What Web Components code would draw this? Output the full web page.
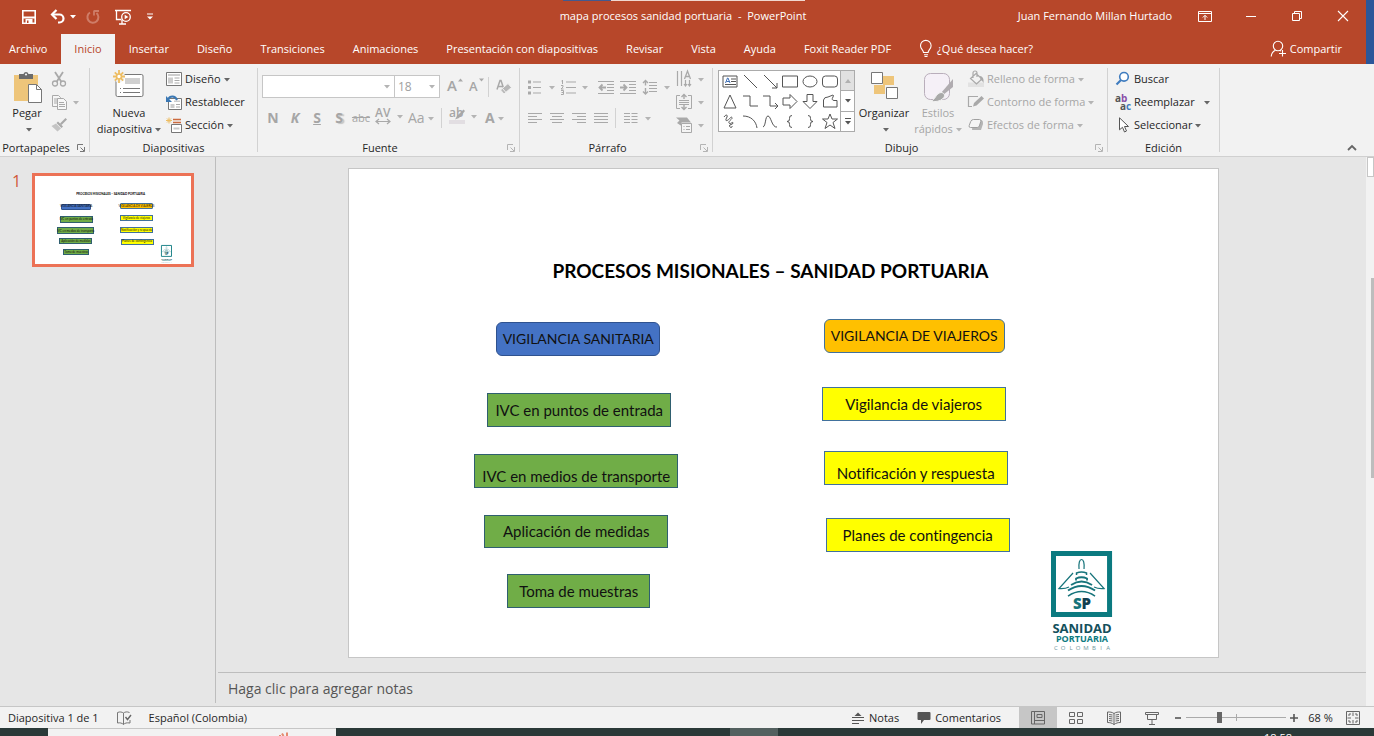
<!DOCTYPE html>
<html lang="es">
<head>
<meta charset="utf-8">
<title>mapa procesos sanidad portuaria - PowerPoint</title>
<style>
  html, body {
    height: 100%;
    margin: 0;
  }
  body {
    font: 11px/16px "Open Sans", "Noto Sans", sans-serif;
    color: #262626;
    overflow: hidden;
  }
</style>
</head>
<body>
<ppt-app></ppt-app>

<script>
// name: [width, height, markup]
const G = '#a9a9a9';
const ICONS = {
  arrow: [6, 4, '<path d="M0 0h6L3 3.5z" fill="currentColor"/>'],
  save: [16, 16, '<path d="M1.8 1.8h12.4v12.4H1.8z" fill="none" stroke="#fff" stroke-width="1.6"/><path d="M2 7.500h12v2H2zM4.500 10h7v5h-7z" fill="#fff"/><path d="M6 11.500h1.500V14H6z" fill="#b7472a"/>'],
  undo: [16, 16, '<path d="M2 5.500h7.500a4 4 0 0 1 0 8H8" fill="none" stroke="#fff" stroke-width="2.200"/><path d="M6.500 1 2 5.500 6.500 10" fill="none" stroke="#fff" stroke-width="2.200"/>'],
  redo: [16, 16, '<path d="M5 3.500A5.500 5.500 0 1 0 11.500 4" fill="none" stroke="#cf7d68" stroke-width="2"/><path d="M9 1.500v5M9 2h5" fill="none" stroke="#cf7d68" stroke-width="1.800"/>'],
  show: [18, 16, '<path d="M1 1.500h16M2.500 2v8.500h5M8 11v4M5 15h7" fill="none" stroke="#fff" stroke-width="1.300"/><circle cx="12" cy="8" r="4.300" fill="#b7472a" stroke="#fff" stroke-width="1.300"/><path d="M10.700 5.700v4.600L14.300 8z" fill="#fff"/>'],
  qat: [8, 8, '<path d="M1 1h6" stroke="#fff"/><path d="M1 3.500h6L4 6.500z" fill="#fff"/>'],
  ribbonopt: [14, 12, '<path d="M.5 1.500h13v10H.5zM.5 3.500h13" fill="none" stroke="#fff"/><path d="M7 10V5.500M4.800 7.500 7 5.300l2.200 2.200" fill="none" stroke="#fff"/>'],
  min: [10, 10, '<path d="M0 5.500h10" stroke="#fff"/>'],
  restore: [12, 12, '<path d="M1.500 3.500h7v7h-7zM3.500 3V1.500h7v7H9" fill="none" stroke="#fff"/>'],
  close: [12, 12, '<path d="M1 1l10 10M11 1 1 11" stroke="#fff" stroke-width="1.100"/>'],
  bulb: [14, 18, '<path d="M4.500 12.500c0-2.500-3-3.500-3-6.800a5.300 5.300 0 0 1 10.600 0c0 3.300-3 4.300-3 6.800zM5 14.700h4M5.500 16.500h3" fill="none" stroke="#fff" stroke-width="1.100"/>'],
  person: [16, 18, '<circle cx="8" cy="6" r="4.700" fill="none" stroke="#fff" stroke-width="1.100"/><path d="M1.200 16.500c.3-3.500 1.800-5.300 4.300-6.300M12.500 10v6.500M9 13.500h7M9.800 10.300l1.200.8" fill="none" stroke="#fff" stroke-width="1.100"/>'],
  paste: [32, 32, '<path d="M3 5h24v26H3z" fill="#eec57a"/><path d="M8 4h4.500a2.600 2.600 0 0 1 5 0H22v5H8z" fill="#6b6b6b"/><circle cx="15" cy="4.500" r="1.100" fill="#f2f2f2"/><path d="M17.500 14.500h8l5 5v13H17.500z" fill="#fff" stroke="#777"/><path d="M25.500 14.500v5h5" fill="none" stroke="#777"/>'],
  cut: [16, 16, `<path d="M4 1l6.500 10M12 1 5.500 11" stroke="${G}" stroke-width="1.800"/><circle cx="4" cy="12.500" r="2.500" fill="none" stroke="${G}" stroke-width="1.300"/><circle cx="12" cy="12.500" r="2.500" fill="none" stroke="${G}" stroke-width="1.300"/>`],
  copy: [16, 16, `<path d="M1.500 1.500h6l2 2v9h-8z" fill="#f5f5f5" stroke="${G}"/><path d="M3 5h4M3 7h3M3 9h3" stroke="${G}"/><path d="M6.500 4.500h6l3 3v8h-9z" fill="#f7f7f7" stroke="${G}"/><path d="M8 8.500h5M8 10.500h6M8 12.500h6" stroke="${G}"/>`],
  brush: [16, 16, `<path d="M14.500 1 16 2.500 10.500 8 9 6.500z" fill="${G}"/><path d="M7 4.500 12 9.500 10.500 11 5.500 6z" fill="${G}"/><path d="M5 6.500 10 11.500 6.500 14.500 .5 9z" fill="#c4c4c4"/>`],
  newslide: [32, 32, '<rect x="3" y="4.500" width="27" height="22" rx="1.500" fill="#fff" stroke="#777"/><path d="M12 8h15v6H12z" fill="#d0d0d0"/><path d="M7 18.500h1M10 18.500h17M7 22.500h1M10 22.500h17" stroke="#777"/><path d="M6 .5v12M0 6.500h12M2 2.500l8 8M10 2.500l-8 8" stroke="#f2f2f2" stroke-width="4"/><path d="M6 0v4M6 9v4M0 6.500h4M8 6.500h4M1.800 2.300l2.500 2.500M7.700 8.200l2.500 2.500M10.200 2.300 7.700 4.800M4.300 8.200l-2.500 2.500" stroke="#edbd62" stroke-width="1.800"/><circle cx="6" cy="6.500" r="2.400" fill="#fff" stroke="#edbd62" stroke-width="1.500"/>'],
  layout: [16, 16, '<path d="M.5 1.500h15v13H.5z" fill="#fff" stroke="#777"/><path d="M2 3h12v2H2zM2 6.500h5v6H2z" fill="#cdcdcd"/><path d="M8.500 7h5M8.500 9.500h5M8.500 12h5" stroke="#aaa"/>'],
  reset: [16, 16, '<path d="M2.500 4.500h13v11h-13z" fill="#fff" stroke="#777"/><path d="M8 6.500h6v1.500H8zM4.500 10h4v4h-4z" fill="#cdcdcd"/><path d="M10 10.500h4M10 13h4" stroke="#aaa"/><path d="M2 5.500c2-4 7-4 9 .5" fill="none" stroke="#3b78b4" stroke-width="2"/><path d="M0 2v6h6z" fill="#3b78b4"/>'],
  section: [16, 16, '<path d="M7 2.500h8M7 5.500h8" stroke="#cb6a3e" stroke-width="1.300"/><path d="M5.500 7.500h10v8h-10z" fill="#fff" stroke="#777"/><path d="M7.500 10.500h6v2h-6z" fill="#c9c9c9"/><path d="M3 .5v6M0 3.500h6M1 1.500l4 4M5 1.500l-4 4" stroke="#edbd62"/>'],
  grow: [16, 16, `<path d="M11 4.500 13.500 1.500 16 4.500z" fill="${G}"/>`],
  shrink: [16, 16, `<path d="M10 1.500h5L12.500 4.500z" fill="${G}"/>`],
  eraser: [16, 16, `<path d="M1 10.500 4 1.500h1L8 10.500M2.500 7.500h5" fill="none" stroke="${G}" stroke-width="1.500"/><path d="M12 4.500 15.500 8.500 8 15 4.500 11z" fill="#b8b8b8" stroke="#f2f2f2"/><path d="M6.500 9.500 10 13.500" stroke="#f2f2f2"/>`],
  bullets: [16, 16, `<path d="M1 1.500h3v3H1zM1 7h3v3H1zM1 12.500h3v3H1z" fill="${G}"/><path d="M6 3h8M6 8.500h8M6 14h8" stroke="${G}"/>`],
  numbers: [16, 16, `<path d="M2.500 1v4M1.500 2h1M1 6.500h2v1.500L1 10h2.500M1 11.500h2.500v4H1M1.500 13.500h2" fill="none" stroke="${G}"/><path d="M6 3h10M6 8.500h10M6 14h10" stroke="${G}"/>`],
  outdent: [16, 16, `<path d="M0 2.500h16M9 5.500h7M9 8.500h7M9 11.500h7M0 14.500h16" stroke="${G}"/><path d="M8 8.500H2M4.500 5.500l-3 3 3 3" fill="none" stroke="${G}" stroke-width="1.800"/>`],
  indent: [16, 16, `<path d="M0 2.500h16M9 5.500h7M9 8.500h7M9 11.500h7M0 14.500h16" stroke="${G}"/><path d="M0 8.500h6M3.500 5.500l3 3-3 3" fill="none" stroke="${G}" stroke-width="1.800"/>`],
  spacing: [16, 16, `<path d="M3.500 1.500v5M1 4l2.500-2.500L6 4M3.500 9v6M1 12.500 3.500 15 6 12.500" fill="none" stroke="${G}" stroke-width="1.400"/><path d="M7 3.500h8M7 6.500h8M7 9.500h8M7 12.500h8" stroke="${G}"/>`],
  left: [16, 16, `<path d="M1 3.500h14M1 6.500h9M1 9.500h14M1 12.500h9" stroke="${G}"/>`],
  center: [16, 16, `<path d="M1 3.500h14M3 6.500h10M1 9.500h14M3 12.500h10" stroke="${G}"/>`],
  right: [16, 16, `<path d="M1 3.500h14M6 6.500h9M1 9.500h14M6 12.500h9" stroke="${G}"/>`],
  justify: [16, 16, `<path d="M1 3.500h14M1 6.500h14M1 9.500h14M1 12.500h14" stroke="${G}"/>`],
  columns: [16, 16, `<path d="M1 3.500h6M1 6.500h6M1 9.500h6M1 12.500h6M8.500 3.500h6M8.500 6.500h6M8.500 9.500h6M8.500 12.500h6" stroke="${G}"/>`],
  direction: [16, 16, `<path d="M1.500 0v15M5.500 0v15M9.500 9v6M13.500 9v6M8 13l1.500 2 1.500-2M12 13l1.500 2 1.500-2" fill="none" stroke="${G}" stroke-width="1.200"/><path d="M8.500 8 11.500 0 14.500 8M9.500 5.500h4" fill="none" stroke="${G}" stroke-width="1.300"/>`],
  valign: [16, 16, `<path d="M4 1.500H.5v13H4M12 1.500h3.500v13H12M3 6.500h10M3 8.500h10M3 10.500h10" fill="none" stroke="${G}"/><path d="M8 0v5M5.500 3 8 .5 10.500 3M8 11v5M5.500 13 8 15.500 10.500 13" fill="none" stroke="${G}" stroke-width="1.400"/>`],
  smart: [16, 16, `<path d="M0 .5h11l4 5H5.500V9L1 6 3.500 3.500z" fill="${G}"/><path d="M5.500 6.500h10v9h-10z" fill="#f5f5f5" stroke="${G}"/><path d="M7.500 9.500h1M10 9.500h4M7.500 12.500h1M10 12.500h4" stroke="${G}"/>`],
  spacingchars: [16, 18, `<path d="M1 14.500h14M4 12l-3 2.500L4 17M12 12l3 2.500L12 17" fill="none" stroke="${G}" stroke-width="1.200"/>`],
  marker: [16, 18, `<path d="M0 13h16v4H0z" fill="#e2dee2"/><path d="M14.500 2.500 16 4 10 11 6 12.500 8 9z" fill="${G}"/>`],
  arrange: [32, 32, '<path d="M15 6h11v9H15zM6 15h11v9H6z" fill="#eec57a"/><path d="M3.500 2.500h11v11h-11zM18.500 17.500h11v11h-11z" fill="#fff" stroke="#777"/>'],
  styles: [32, 32, `<rect x="2.500" y="3.500" width="25" height="26" rx="6" fill="#f5f0f7" stroke="#b9aebb"/><path d="M31 9v8L21 25l-2-2z" fill="#b0acb0"/><path d="M19 22.500c3 0 5 3 2 6-3 3-8 3.500-12.500 3 5-1.500 5-8 10.500-9z" fill="${G}" stroke="#f2f2f2"/>`],
  fill: [16, 16, `<path d="M0 11.500h16V16H0z" fill="#e2e2e2"/><path d="M8 2.500 14 8 8.500 13 2.500 7.500zM5 7V2a2 2 0 0 1 4 0v4" fill="none" stroke="${G}" stroke-width="1.200"/><path d="M12 5c3 .5 4 3 3.500 7-1-2-2-3-3-3z" fill="${G}"/>`],
  outline: [16, 16, `<path d="M10 2.500H.5v10H4" fill="none" stroke="${G}" stroke-width="1.200"/><path d="M13.500 2 16 4.500 8.500 11.500 5 12.500 6 9z" fill="${G}"/>`],
  effects: [16, 16, '<path d="M5 3h8.500q2 1 1.500 4l-2 6H4z" fill="#b4b4b4"/><path d="M5.500 2.500h6q2 0 1.300 2l-1.500 4.500q-.5 1.500-2 1.500H2.500Q.5 10.500 1.200 8.500L2.700 4.500q.8-2 2.800-2z" fill="#f5f5f5" stroke="#a0a0a0"/>'],
  find: [16, 16, '<circle cx="9" cy="5.800" r="4.300" fill="#fff" stroke="#3f7cbf" stroke-width="1.600"/><path d="M6 9 1.500 13.500" stroke="#3f7cbf" stroke-width="2.200"/>'],
  select: [16, 16, '<path d="M4.500 .8v12l3-2.500 2 4.700 2-1-2-4.500h4z" fill="#fff" stroke="#555"/>'],
  launcher: [8, 8, '<path d="M.5 6V.5H6M7.500 3v4.500H3M3.500 3.500l3.500 3.500" fill="none" stroke="currentColor"/>'],
  chevron: [10, 6, '<path d="M1 5l4-4 4 4" fill="none" stroke="#666" stroke-width="1.800"/>'],
  spell: [16, 16, '<path d="M7.500 14.500V3C6 2 4 1.500 1.500 2.500v10.500c2.500-.5 4.500 0 6 1.500 1.500-1.500 3-2 6.500-1.500V10M7.500 3C9 1.800 11 1.500 13.500 2.500" fill="none" stroke="#777"/><path d="M9.500 7l2 2.500L15 5" fill="none" stroke="#666" stroke-width="1.400"/>'],
  notes: [14, 14, '<path d="M3.500 5 7 1.500 10.500 5z" fill="#555"/><path d="M1 6.500h12M1 9.500h12M1 12.500h7" stroke="#555"/>'],
  comment: [14, 14, '<path d="M1.500 1h11q1 0 1 1v6q0 1-1 1H7l-3 4V9H1.500q-1 0-1-1V2q0-1 1-1z" fill="#555"/>'],
  normal: [16, 16, '<path d="M1.500 1.500h13v12.500h-13zM4.500 1.500V14M5 10.500h9.500M7 4.500h5v3H7z" fill="none" stroke="#666"/>'],
  sorter: [16, 16, '<path d="M1.500 2.500h5v4h-5zM9.500 2.500h5v4h-5zM1.500 9.500h5v4h-5zM9.500 9.500h5v4h-5z" fill="none" stroke="#666"/>'],
  reading: [16, 16, '<path d="M8 14.500V3.500C6 2 4 2 1.500 2v10.500C4 12.500 6 13 8 14.500c2-1.500 4-2 6.500-2V2C12 2 10 2 8 3.500M3 4.500l3.500.5M3 6.500l3.500.5M3 8.500l3.500.5M3 10.500l3.500.5M13 4.500 9.500 5M13 6.500 9.500 7M13 8.500 9.500 9M13 10.500l-3.500.5" fill="none" stroke="#666"/>'],
  present: [16, 16, '<path d="M1.500 2.500h13v2h-13zM3.500 4.500h9v5h-9zM8 9.500v5M5 14.500h6" fill="none" stroke="#666"/>'],
  minus: [8, 8, '<path d="M1 4h6" stroke="#555" stroke-width="1.600"/>'],
  plus: [8, 8, '<path d="M0 4h8M4 0v8" stroke="#555" stroke-width="1.600"/>'],
  fit: [14, 14, '<path d="M.5 .5h13v13H.5z" fill="none" stroke="#666"/><path d="M7 1.500v3.500M7 9v3.500M1.500 7H5M9 7h3.500M3 5V3h2M9 3h2v2M11 9v2H9M5 11H3V9" fill="none" stroke="#666" stroke-width="1"/>']
};

function icon(name) {
  const [w, h, body] = ICONS[name];
  return `<svg width="${w}" height="${h}" viewBox="0 0 ${w} ${h}" aria-hidden="true">${body}</svg>`;
}

class UiIcon extends HTMLElement {
  connectedCallback() {
    this.attachShadow({ mode: 'open' });
    this.shadowRoot.innerHTML = `
      <style>
        :host { display: inline-flex; flex: none; }
        svg { display: block; overflow: visible; }
      </style>
      ${icon(this.getAttribute('name'))}
    `;
  }
}
customElements.define('ui-icon', UiIcon);

// Ribbon button: a small row by default, kind="big" for icon over text
class RibbonButton extends HTMLElement {
  connectedCallback() {
    const name = this.getAttribute('icon');
    const label = this.getAttribute('label');
    this.attachShadow({ mode: 'open' });
    this.shadowRoot.innerHTML = `
      <style>
        :host { display: inline-flex; flex: none; color: #262626; }
        :host([disabled]) { color: #a6a6a6; }
        button {
          display: inline-flex;
          align-items: center;
          justify-content: var(--justify, flex-start);
          gap: 3px;
          padding: 0;
          border: 0;
          background: none;
          font: inherit;
          color: inherit;
          white-space: nowrap;
          width: 100%;
        }
        .arrow { color: #666; display: inline-block; vertical-align: middle; margin-left: 3px; }
        :host([disabled]) .arrow { color: #b4b4b4; }
        :host([kind="big"]) { padding-top: 3px; align-items: flex-start; }
        :host([kind="big"]) button { flex-direction: column; }
      </style>
      <button type="button" ${this.hasAttribute('disabled') ? 'disabled' : ''} ${label ? `aria-label="${label}"` : ''}>
        ${name ? `<ui-icon name="${name}"></ui-icon>` : ''}
        ${label && !this.hasAttribute('menu') ? '' : `<span><slot></slot>${this.hasAttribute('menu') ? '<ui-icon class="arrow" name="arrow"></ui-icon>' : ''}</span>`}
      </button>
    `;
  }
}
customElements.define('ribbon-button', RibbonButton);

class RibbonGroup extends HTMLElement {
  connectedCallback() {
    const launcher = this.getAttribute('launcher');
    this.attachShadow({ mode: 'open' });
    this.shadowRoot.innerHTML = `
      <style>
        :host { display: flex; flex: none; }
        :host::after { content: ""; width: 1px; margin: 4px 0; background: #d2d2d2; }
        section { flex: 1; display: flex; flex-direction: column; }
        .body { display: flex; height: 69px; padding-top: 3px; }
        footer { display: flex; align-items: center; padding-top: 3px; line-height: 17px; }
        footer span { flex: 1; text-align: center; }
        button { width: 17px; padding: 0; border: 0; background: none; color: #777; line-height: 0; }
        button:disabled { color: #b4b4b4; }
      </style>
      <section>
        <div class="body"><slot></slot></div>
        <footer>
          <span>${this.getAttribute('name')}</span>
          ${launcher ? `<button type="button" aria-label="Más opciones" ${launcher === 'off' ? 'disabled' : ''}><ui-icon name="launcher"></ui-icon></button>` : ''}
        </footer>
      </section>
    `;
  }
}
customElements.define('ribbon-group', RibbonGroup);

class TitleBar extends HTMLElement {
  connectedCallback() {
    this.attachShadow({ mode: 'open' });
    this.shadowRoot.innerHTML = `
      <style>
        :host {
          position: relative;
          display: grid;
          grid-template-columns: 1fr auto 1fr;
          align-items: center;
          height: 34px;
          background: #b7472a;
          color: #fff;
        }
        .quick { display: flex; align-items: center; gap: 6px; padding-left: 21px; }
        .right { display: flex; justify-content: flex-end; align-items: center; margin-top: -2px; }
        button { display: flex; align-items: center; justify-content: center; padding: 0; border: 0; background: none; color: inherit; }
        .quick button { height: 20px; }
        .quick .undo { margin-left: 7px; }
        .quick .list { margin-left: -2px; }
        .quick .redo { margin-left: 3px; }
        .quick .show { margin-left: 7px; }
        .quick .more { margin-left: 8px; }
        .right button { width: 46px; height: 30px; }
        .user { margin-right: 10px; }
        h1 { margin: 0; font: inherit; white-space: pre; margin-top: -2px; }
        .peek { position: absolute; top: 0; left: 50%; width: 242px; height: 1px; margin-left: -120px; background: linear-gradient(90deg, #44598e 48px, #f0d8d0 48px); }
      </style>
      <div class="peek"></div>
      <div class="quick">
        <button type="button" aria-label="Guardar"><ui-icon name="save"></ui-icon></button>
        <button type="button" aria-label="Deshacer" class="undo"><ui-icon name="undo"></ui-icon></button>
        <button type="button" aria-label="Lista de deshacer" class="list"><ui-icon name="arrow"></ui-icon></button>
        <button type="button" aria-label="Repetir" disabled class="redo"><ui-icon name="redo"></ui-icon></button>
        <button type="button" aria-label="Presentación desde el principio" class="show"><ui-icon name="show"></ui-icon></button>
        <button type="button" aria-label="Personalizar barra" class="more"><ui-icon name="qat"></ui-icon></button>
      </div>
      <h1>mapa procesos sanidad portuaria  -  PowerPoint</h1>
      <div class="right">
        <span class="user">Juan Fernando Millan Hurtado</span>
        <button type="button" aria-label="Opciones de cinta"><ui-icon name="ribbonopt"></ui-icon></button>
        <button type="button" aria-label="Minimizar"><ui-icon name="min"></ui-icon></button>
        <button type="button" aria-label="Restaurar"><ui-icon name="restore"></ui-icon></button>
        <button type="button" aria-label="Cerrar"><ui-icon name="close"></ui-icon></button>
      </div>
    `;
  }
}
customElements.define('title-bar', TitleBar);

class TabStrip extends HTMLElement {
  connectedCallback() {
    const tabs = ['Archivo', 'Inicio', 'Insertar', 'Diseño', 'Transiciones', 'Animaciones',
      'Presentación con diapositivas', 'Revisar', 'Vista', 'Ayuda', 'Foxit Reader PDF'];
    this.attachShadow({ mode: 'open' });
    this.shadowRoot.innerHTML = `
      <style>
        :host { display: flex; height: 30px; background: #b7472a; color: #fff; }
        nav { display: flex; }
        button {
          display: flex;
          align-items: center;
          gap: 4px;
          padding: 0 14px;
          border: 0;
          background: none;
          font: inherit;
          color: inherit;
          white-space: nowrap;
        }
        button:first-child { padding-left: 9px; }
        button.on { background: #f2f2f2; color: #b7472a; padding: 0 13px; }
        .share { margin-left: auto; padding-right: 24px; }
      </style>
      <nav>
        ${tabs.map((t, i) => `<button type="button" class="${i === 1 ? 'on' : ''}">${t}</button>`).join('')}
        <button type="button"><ui-icon name="bulb"></ui-icon>¿Qué desea hacer?</button>
      </nav>
      <button type="button" class="share"><ui-icon name="person"></ui-icon>Compartir</button>
    `;
  }
}
customElements.define('tab-strip', TabStrip);

class ShapeGallery extends HTMLElement {
  connectedCallback() {
    const shapes = [
      ['Cuadro de texto', '<path d="M1 3h14v11H1z" fill="#fff"/><path d="M3.500 10 5.500 5h.5l2 5M4.500 8.500h3" stroke="#3f6fb5"/><path d="M9 6h5M9 8.500h5M3 11.500h11"/>'],
      ['Línea', '<path d="M2 2l13 13"/>'],
      ['Flecha', '<path d="M2 2l13 13M15 10v5h-5"/>'],
      ['Rectángulo', '<path d="M.5 3h15v11H.5z"/>'],
      ['Elipse', '<ellipse cx="8" cy="8.500" rx="7" ry="5.500"/>'],
      ['Rectángulo redondeado', '<rect x=".5" y="3" width="15" height="11" rx="3"/>'],
      ['Triángulo', '<path d="M8 2l6 13H2z"/>'],
      ['Conector angular', '<path d="M1 3h7v10h8"/>'],
      ['Conector de flecha', '<path d="M1 3h7v10h8M13 10l3 3-3 3"/>'],
      ['Flecha derecha', '<path d="M1 5h7V1.500l7 7-7 7V12H1z"/>'],
      ['Flecha abajo', '<path d="M5 1.500h6v7h4l-7 7-7-7h4z"/>'],
      ['Forma libre', '<path d="M1.500 14V7Q2 4 6 4l5-2q1 0 0 2-2 3 1 3.500h3v6.500z"/>'],
      ['Garabato', '<path d="M2 4c2-3 4-2 3 0S3 8 5 7.500 9 3 10 4.500 6 8 7 10s4-2 4 0-4 1-3.500 3 3 2 2.500 0"/>'],
      ['Arco', '<path d="M1 3c8 0 13 5 14 12"/>'],
      ['Curva', '<path d="M1 14C4 13 3 3 6 3s4 12 9 11"/>'],
      ['Llave de apertura', '<path d="M10 2.500q-3 0-2.500 3T5 8.500q3 0 2.500 3t2.500 3"/>'],
      ['Llave de cierre', '<path d="M6 2.500q3 0 2.500 3t2.500 3q-3 0-2.500 3T6 14.500"/>'],
      ['Estrella', '<path d="M8 1l2 5h5.500L11 9.500l2 6L8 12l-5 3.500 2-6L.5 6H6z"/>']
    ];
    this.attachShadow({ mode: 'open' });
    this.shadowRoot.innerHTML = `
      <style>
        :host { display: flex; box-sizing: border-box; height: 62px; border: 1px solid #ababab; background: #fff; }
        .grid { display: grid; grid-template-columns: repeat(6, 20px); grid-auto-rows: 20px; padding-left: 1px; }
        button { display: flex; align-items: center; justify-content: center; padding: 0; border: 0; background: none; color: inherit; }
        .scroll { display: flex; flex-direction: column; border-left: 1px solid #ababab; width: 13px; color: #555; }
        .scroll button { flex: 1; }
        .scroll button + button { border-top: 1px solid #ababab; }
        .scroll button:disabled { background: #e1e1e1; color: #b0b0b0; }
        svg { display: block; }
      </style>
      <div class="grid">
        ${shapes.map(([n, p]) => `<button type="button" aria-label="${n}"><svg width="16" height="16" viewBox="0 0 16 16" fill="none" stroke="#555">${p}</svg></button>`).join('')}
      </div>
      <div class="scroll">
        <button type="button" disabled aria-label="Subir"><svg width="6" height="4" viewBox="0 0 6 4"><path d="M0 4h6L3 0z" fill="currentColor"/></svg></button>
        <button type="button" aria-label="Bajar"><ui-icon name="arrow"></ui-icon></button>
        <button type="button" aria-label="Más formas"><svg width="6" height="7" viewBox="0 0 6 7"><path d="M0 .5h6" stroke="currentColor"/><path d="M0 3h6L3 6.500z" fill="currentColor"/></svg></button>
      </div>
    `;
  }
}
customElements.define('shape-gallery', ShapeGallery);

class RibbonBar extends HTMLElement {
  connectedCallback() {
    this.attachShadow({ mode: 'open' });
    this.shadowRoot.innerHTML = `
      <style>
        :host { display: flex; background: #f2f2f2; border-bottom: 1px solid #d0d0d0; }
        .clip { width: 90px; }
        .slides { width: 168px; }
        .font { width: 262px; }
        .para { width: 193px; }
        .draw { width: 395px; }
        .edit { width: 112px; }
        .col { display: grid; grid-auto-rows: 23px; align-items: center; justify-items: start; }
        .two { display: flex; flex-direction: column; gap: 8px; padding-top: 8px; }
        .line { display: flex; align-items: center; height: 23px; }
        .line > * { flex: none; }
        .sep { width: 1px; height: 20px; background: #d2d2d2; }
        .t { width: 22px; --justify: center; }
        .u { width: 19px; }
        .m { width: 33px; }
        .n { width: 35px; }
        .gap { margin-left: 3px; }
        .after { margin-left: 7px; }
        .clip .big { width: 38px; margin-left: 8px; }
        .clip .col { margin-left: 5px; }
        .slides .big { width: 68px; margin-left: 5px; }
        .slides .col { margin-left: 3px; }
        .font .two { padding-left: 4px; }
        .combo { position: relative; display: flex; color: #b4b4b4; }
        .combo ui-icon { position: absolute; right: 5px; top: 10px; }
        select {
          appearance: none;
          box-sizing: border-box;
          height: 23px;
          margin: 0;
          padding: 0 3px;
          border: 1px solid #c6c6c6;
          border-radius: 0;
          background: #fff;
          font: inherit;
          font-size: 12px;
          color: #a0a0a0;
          opacity: 1;
        }
        .family { width: 133px; }
        .size { width: 46px; margin-left: -1px; }
        .f { font-size: 14px; }
        .f b, .f i { font-weight: 700; }
        .sh { text-shadow: 2px 1px 1px #c4c4c4; }
        .over { position: relative; --justify: flex-start; }
        .over small { position: absolute; left: 0; top: 0; font-size: 12px; font-weight: 600; line-height: 12px; color: #a6a6a6; }
        .over .cap { font-size: 15px; line-height: 16px; }
        .over .cut { font-size: 13px; line-height: 18px; }
        .para .two { padding-left: 7px; }
        .para .col { margin-left: 6px; }
        .draw shape-gallery { margin: 3px 0 0 5px; }
        .draw .big { width: 50px; margin-left: 4px; }
        .draw .col { margin-left: 5px; }
        .edit .col { margin-left: 7px; }
        .ab { display: flex; flex-direction: column; width: 16px; font: 700 10px/8px "Open Sans", sans-serif; color: #555; }
        .ab em { font-style: normal; color: #8a4fa8; }
        .ab .next { margin-left: 5px; }
        .ab .next em { color: #3f7cbf; }
        .rep { display: flex; align-items: center; gap: 3px; }
        .hide { margin: auto 17px 5px auto; padding: 0; border: 0; background: none; line-height: 0; }
      </style>
      <ribbon-group class="clip" name="Portapapeles" launcher="on">
        <ribbon-button class="big" kind="big" icon="paste" menu>Pegar<br></ribbon-button>
        <div class="col">
          <ribbon-button icon="cut" label="Cortar" disabled></ribbon-button>
          <ribbon-button icon="copy" label="Copiar" disabled menu></ribbon-button>
          <ribbon-button icon="brush" label="Copiar formato" disabled></ribbon-button>
        </div>
      </ribbon-group>
      <ribbon-group class="slides" name="Diapositivas">
        <ribbon-button class="big" kind="big" icon="newslide" menu>Nueva<br>diapositiva</ribbon-button>
        <div class="col">
          <ribbon-button icon="layout" menu>Diseño</ribbon-button>
          <ribbon-button icon="reset">Restablecer</ribbon-button>
          <ribbon-button icon="section" menu>Sección</ribbon-button>
        </div>
      </ribbon-group>
      <ribbon-group class="font" name="Fuente" launcher="off">
        <div class="two">
          <div class="line">
            <span class="combo"><select class="family" aria-label="Fuente" disabled><option></option></select><ui-icon name="arrow"></ui-icon></span>
            <span class="combo"><select class="size" aria-label="Tamaño de fuente" disabled><option>18</option></select><ui-icon name="arrow"></ui-icon></span>
            <span class="t over after"><small class="cap">A</small><ribbon-button icon="grow" label="Aumentar tamaño" disabled></ribbon-button></span>
            <span class="u over"><small class="cap cut">A</small><ribbon-button icon="shrink" label="Reducir tamaño" disabled></ribbon-button></span>
            <span class="sep"></span>
            <ribbon-button class="after" icon="eraser" label="Borrar formato" disabled></ribbon-button>
          </div>
          <div class="line">
            <ribbon-button class="t f" disabled><b>N</b></ribbon-button>
            <ribbon-button class="t f" disabled><i>K</i></ribbon-button>
            <ribbon-button class="t f" disabled><b><u>S</u></b></ribbon-button>
            <ribbon-button class="t f" disabled><b class="sh">S</b></ribbon-button>
            <ribbon-button class="t" disabled><s>abc</s></ribbon-button>
            <span class="over m gap"><small>AV</small><ribbon-button icon="spacingchars" label="Espacio entre caracteres" disabled menu></ribbon-button></span>
            <ribbon-button class="m f" disabled menu>Aa</ribbon-button>
            <span class="sep"></span>
            <span class="over m after"><small>ab</small><ribbon-button icon="marker" label="Color de resaltado" disabled menu></ribbon-button></span>
            <ribbon-button class="m f gap" disabled menu><b>A</b></ribbon-button>
          </div>
        </div>
      </ribbon-group>
      <ribbon-group class="para" name="Párrafo" launcher="off">
        <div class="two">
          <div class="line">
            <ribbon-button class="m" icon="bullets" label="Viñetas" disabled menu></ribbon-button>
            <ribbon-button class="n" icon="numbers" label="Numeración" disabled menu></ribbon-button>
            <ribbon-button class="t" icon="outdent" label="Disminuir nivel" disabled></ribbon-button>
            <ribbon-button class="t" icon="indent" label="Aumentar nivel" disabled></ribbon-button>
            <ribbon-button class="gap" icon="spacing" label="Interlineado" disabled menu></ribbon-button>
          </div>
          <div class="line">
            <ribbon-button class="t" style="--justify: flex-start" icon="left" label="Alinear a la izquierda" disabled></ribbon-button>
            <ribbon-button class="t" style="--justify: flex-start" icon="center" label="Centrar" disabled></ribbon-button>
            <ribbon-button class="t" style="--justify: flex-start" icon="right" label="Alinear a la derecha" disabled></ribbon-button>
            <ribbon-button class="t" style="--justify: flex-start" icon="justify" label="Justificar" disabled></ribbon-button>
            <span class="sep"></span>
            <ribbon-button class="after" icon="columns" label="Columnas" disabled menu></ribbon-button>
          </div>
        </div>
        <div class="col">
          <ribbon-button icon="direction" label="Dirección del texto" disabled menu></ribbon-button>
          <ribbon-button icon="valign" label="Alinear texto" disabled menu></ribbon-button>
          <ribbon-button icon="smart" label="Convertir a SmartArt" disabled menu></ribbon-button>
        </div>
      </ribbon-group>
      <ribbon-group class="draw" name="Dibujo" launcher="off">
        <shape-gallery></shape-gallery>
        <ribbon-button class="big" kind="big" icon="arrange" menu>Organizar<br></ribbon-button>
        <ribbon-button class="big" kind="big" icon="styles" disabled menu>Estilos<br>rápidos</ribbon-button>
        <div class="col">
          <ribbon-button icon="fill" disabled menu>Relleno de forma</ribbon-button>
          <ribbon-button icon="outline" disabled menu>Contorno de forma</ribbon-button>
          <ribbon-button icon="effects" disabled menu>Efectos de forma</ribbon-button>
        </div>
      </ribbon-group>
      <ribbon-group class="edit" name="Edición">
        <div class="col">
          <ribbon-button icon="find">Buscar</ribbon-button>
          <div class="rep">
            <span class="ab" aria-hidden="true"><span>a<em>b</em></span><span class="next">a<em>c</em></span></span>
            <ribbon-button>Reemplazar</ribbon-button>
            <ribbon-button class="gap" menu label="Más opciones de reemplazo"></ribbon-button>
          </div>
          <ribbon-button icon="select" menu>Seleccionar</ribbon-button>
        </div>
      </ribbon-group>
      <button class="hide" type="button" aria-label="Contraer la cinta"><ui-icon name="chevron"></ui-icon></button>
    `;
  }
}
customElements.define('ribbon-bar', RibbonBar);

class PortLogo extends HTMLElement {
  connectedCallback() {
    this.attachShadow({ mode: 'open' });
    this.shadowRoot.innerHTML = `
      <style>
        :host { display: block; }
        svg { display: block; width: 100%; overflow: visible; }
      </style>
      <svg viewBox="0 0 61 100" font-family="Open Sans, sans-serif" text-anchor="middle">
        <path d="M2.500 2.500h56v61h-56z" fill="#fff" stroke="#0b7a80" stroke-width="5"/>
        <g fill="none" stroke="#17747b">
          <path d="M28 18c-.5-6 .5-9.500 2.500-9.500S33.500 12 33 18" stroke-width="1.200"/>
          <path d="M25.500 24v-2q5-2 10 0v2" stroke-width="1.500"/>
          <path d="M25 29.500v-2q5.500-2.500 11 0v2" stroke-width="1.800"/>
          <path d="M20 34q10.500-7 21 0" stroke-width="1.800"/>
          <path d="M17 39.500q13.500-9 27 0" stroke-width="2"/>
          <path d="M17 45q13.500-9 27 0" stroke-width="1.500"/>
          <path d="M22 22 8 37.500q6 .5 10-1.500M39 22l14 15.500q-6 .5-10-1.500" stroke-width="1.200"/>
        </g>
        <text x="31" y="58" font-size="15" font-weight="800" fill="#123f50"><tspan fill="#17747b">S</tspan>P</text>
        <text x="31" y="82" font-size="13" font-weight="700" fill="#14505c">SANIDAD</text>
        <text x="31" y="91" font-size="9" font-weight="700" fill="#0b7a80">PORTUARIA</text>
        <text x="5 12 20 27 35 43 50 57" y="99" font-size="6" fill="#6f979b">COLOMBIA</text>
      </svg>
    `;
  }
}
customElements.define('port-logo', PortLogo);

// Coordinates are slide units on an 868 x 488 canvas
class SlideCanvas extends HTMLElement {
  connectedCallback() {
    const boxes = [
      ['VIGILANCIA SANITARIA', 147, 153, 164, 34, 'blue'],
      ['IVC en puntos de entrada', 138, 224, 184, 34, 'green'],
      ['IVC en medios de transporte', 125, 285, 204, 34, 'green low'],
      ['Aplicación de medidas', 135, 346, 184, 33, 'green'],
      ['Toma de muestras', 158, 405, 143, 34, 'green'],
      ['VIGILANCIA DE VIAJEROS', 474, 150, 181, 34, 'gold'],
      ['Vigilancia de viajeros', 472, 218, 184, 34, 'yellow'],
      ['Notificación y respuesta', 474, 282, 184, 34, 'yellow low'],
      ['Planes de contingencia', 476, 349, 184, 34, 'yellow']
    ];
    const at = (x, y) => `left: calc(${x} / 868 * 100%); top: calc(${y} / 488 * 100%);`;
    this.attachShadow({ mode: 'open' });
    this.shadowRoot.innerHTML = `
      <style>
        :host { display: block; position: relative; background: #fff; color: #111; font-family: Lato, "Open Sans", sans-serif; font-variant-ligatures: none; line-height: 1; }
        h2, .box, port-logo { position: absolute; margin: 0; box-sizing: border-box; }
        h2 { transform: translate(-50%, -50%); font-size: var(--title, 19px); font-weight: 700; white-space: nowrap; color: #000; }
        .box { display: flex; align-items: center; justify-content: center; border: 1px solid #2f4f6f; font-size: var(--text, 15px); white-space: nowrap; }
        .low { align-items: flex-end; padding-bottom: var(--low, 3px); }
        .blue, .gold { border-radius: var(--round, 6px); font-size: var(--caps, 14px); }
        .blue { background: #4472c4; border-color: #2f528f; }
        .gold { background: #ffc000; border-color: #41719c; }
        .green { background: #70ad47; border-color: #2f5f6f; }
        .yellow { background: #ffff00; border-color: #41719c; }
        port-logo { width: calc(61 / 868 * 100%); }
      </style>
      <h2 style="${at(421, 101)}">PROCESOS MISIONALES – SANIDAD PORTUARIA</h2>
      ${boxes.map(([t, x, y, w, h, c]) => `<div class="box ${c}" style="${at(x, y)} width: calc(${w} / 868 * 100%); height: calc(${h} / 488 * 100%)">${t}</div>`).join('')}
      <port-logo style="${at(701, 382)}"></port-logo>
    `;
  }
}
customElements.define('slide-canvas', SlideCanvas);

class SlidePane extends HTMLElement {
  connectedCallback() {
    this.attachShadow({ mode: 'open' });
    this.shadowRoot.innerHTML = `
      <style>
        :host { display: flex; box-sizing: border-box; width: 216px; padding: 16px 0 0 12px; border-right: 1px solid #bdbdbd; margin-bottom: 3px; }
        .num { width: 20px; font-size: 16px; color: #d0583c; }
        slide-canvas { flex: none; width: 156px; height: 88px; border: 3px solid #ec7256; --title: 3px; --text: 3px; --caps: 3px; --round: 1px; --low: 0px; }
      </style>
      <span class="num">1</span>
      <slide-canvas></slide-canvas>
    `;
  }
}
customElements.define('slide-pane', SlidePane);

class SlideEditor extends HTMLElement {
  connectedCallback() {
    this.attachShadow({ mode: 'open' });
    this.shadowRoot.innerHTML = `
      <style>
        :host { display: flex; flex-direction: column; min-width: 0; min-height: 0; }
        .stage { flex: 1; display: flex; justify-content: center; min-height: 0; padding: 11px 15px 14px 0; box-sizing: border-box; }
        slide-canvas { box-sizing: border-box; height: 100%; aspect-ratio: 16 / 9; border: 1px solid #c6c6c6; }
        input {
          box-sizing: border-box;
          height: 34px;
          margin: 0 0 0 2px;
          padding: 0 10px 2px;
          border: 0;
          border-top: 1px solid #bdbdbd;
          border-radius: 0;
          background: none;
          font: inherit;
          font-size: 14px;
        }
        input::placeholder { color: #555; }
      </style>
      <div class="stage"><slide-canvas></slide-canvas></div>
      <input type="text" aria-label="Notas" placeholder="Haga clic para agregar notas">
    `;
  }
}
customElements.define('slide-editor', SlideEditor);

class StatusBar extends HTMLElement {
  connectedCallback() {
    this.attachShadow({ mode: 'open' });
    this.shadowRoot.innerHTML = `
      <style>
        :host { display: flex; align-items: stretch; justify-content: space-between; height: 21px; border-top: 1px solid #c6c6c6; background: #f2f2f2; }
        div { display: flex; align-items: stretch; }
        .left { padding-left: 8px; align-items: center; gap: 17px; }
        button { display: flex; align-items: center; justify-content: center; gap: 4px; padding: 0; border: 0; background: none; font: inherit; color: inherit; }
        .text { margin-right: 18px; }
        .view { width: 38px; }
        .on { background: #c6c6c6; }
        .step { width: 14px; }
        input { appearance: none; align-self: center; width: 100px; height: 12px; margin: 0 1px; background: linear-gradient(#aaa, #aaa) 50% 50% / 1px 7px no-repeat, linear-gradient(#aaa, #aaa) 50% 50% / 100% 1px no-repeat; }
        input::-webkit-slider-thumb { appearance: none; width: 5px; height: 11px; background: #666; }
        .pct { width: 39px; }
        .fit { width: 26px; margin-right: 8px; }
      </style>
      <div class="left">
        <span>Diapositiva 1 de 1</span>
        <button type="button" aria-label="Revisar ortografía"><ui-icon name="spell"></ui-icon></button>
        <span>Español (Colombia)</span>
      </div>
      <div>
        <button class="text" type="button"><ui-icon name="notes"></ui-icon>Notas</button>
        <button class="text" type="button"><ui-icon name="comment"></ui-icon>Comentarios</button>
        <button class="view on" type="button" aria-label="Normal"><ui-icon name="normal"></ui-icon></button>
        <button class="view" type="button" aria-label="Clasificador de diapositivas"><ui-icon name="sorter"></ui-icon></button>
        <button class="view" type="button" aria-label="Vista de lectura"><ui-icon name="reading"></ui-icon></button>
        <button class="view" type="button" aria-label="Presentación"><ui-icon name="present"></ui-icon></button>
        <button class="step" type="button" aria-label="Alejar"><ui-icon name="minus"></ui-icon></button>
        <input type="range" min="0" max="100" value="33" aria-label="Zoom">
        <button class="step" type="button" aria-label="Acercar"><ui-icon name="plus"></ui-icon></button>
        <button class="pct" type="button">68 %</button>
        <button class="fit" type="button" aria-label="Ajustar a la ventana"><ui-icon name="fit"></ui-icon></button>
      </div>
    `;
  }
}
customElements.define('status-bar', StatusBar);

class TaskBar extends HTMLElement {
  connectedCallback() {
    this.attachShadow({ mode: 'open' });
    this.shadowRoot.innerHTML = `
      <style>
        :host { display: flex; align-items: flex-start; height: 8px; overflow: hidden; background: #2a3938; color: #fff; }
        .search { display: flex; justify-content: flex-end; box-sizing: border-box; width: 288px; height: 8px; margin-left: 48px; padding-right: 46px; border-top: 1px solid #c6c6c6; background: #f2f2f2; }
        svg { display: block; }
        .task { width: 48px; height: 8px; margin-left: 394px; background: #53605f; }
        time { margin: 3px 82px 0 auto; line-height: 14px; }
      </style>
      <div class="search"><svg width="12" height="7" viewBox="0 0 12 7"><path d="M4 4.500 5.500 7M9 3.500V7M1 7h2" stroke="#e58a70" stroke-width="2"/></svg></div>
      <div class="task"></div>
      <time>18:58</time>
    `;
  }
}
customElements.define('task-bar', TaskBar);

class PptApp extends HTMLElement {
  connectedCallback() {
    this.attachShadow({ mode: 'open' });
    this.shadowRoot.innerHTML = `
      <style>
        :host { display: flex; flex-direction: column; height: 100vh; background: #e6e6e6; }
        .top { display: flex; background: #2b579a; }
        .top > div { flex: 1; margin-right: 8px; }
        main { flex: 1; display: flex; min-height: 0; }
        slide-editor { flex: 1; }
        .edge { display: flex; flex-direction: column; width: 8px; background: #f2f2f2; align-items: flex-end; }
        .edge i { width: 7px; height: 20px; background: #fff; border: 1px solid #c6c6c6; box-sizing: border-box; }
        .edge b { width: 3px; height: 200px; margin-top: 101px; background: #bdbdbd; }
      </style>
      <div class="top"><div><title-bar></title-bar><tab-strip></tab-strip></div></div>
      <ribbon-bar></ribbon-bar>
      <main>
        <slide-pane></slide-pane>
        <slide-editor></slide-editor>
        <div class="edge"><i></i><b></b></div>
      </main>
      <status-bar></status-bar>
      <task-bar></task-bar>
    `;
  }
}
customElements.define('ppt-app', PptApp);
</script>
</body>
</html>
